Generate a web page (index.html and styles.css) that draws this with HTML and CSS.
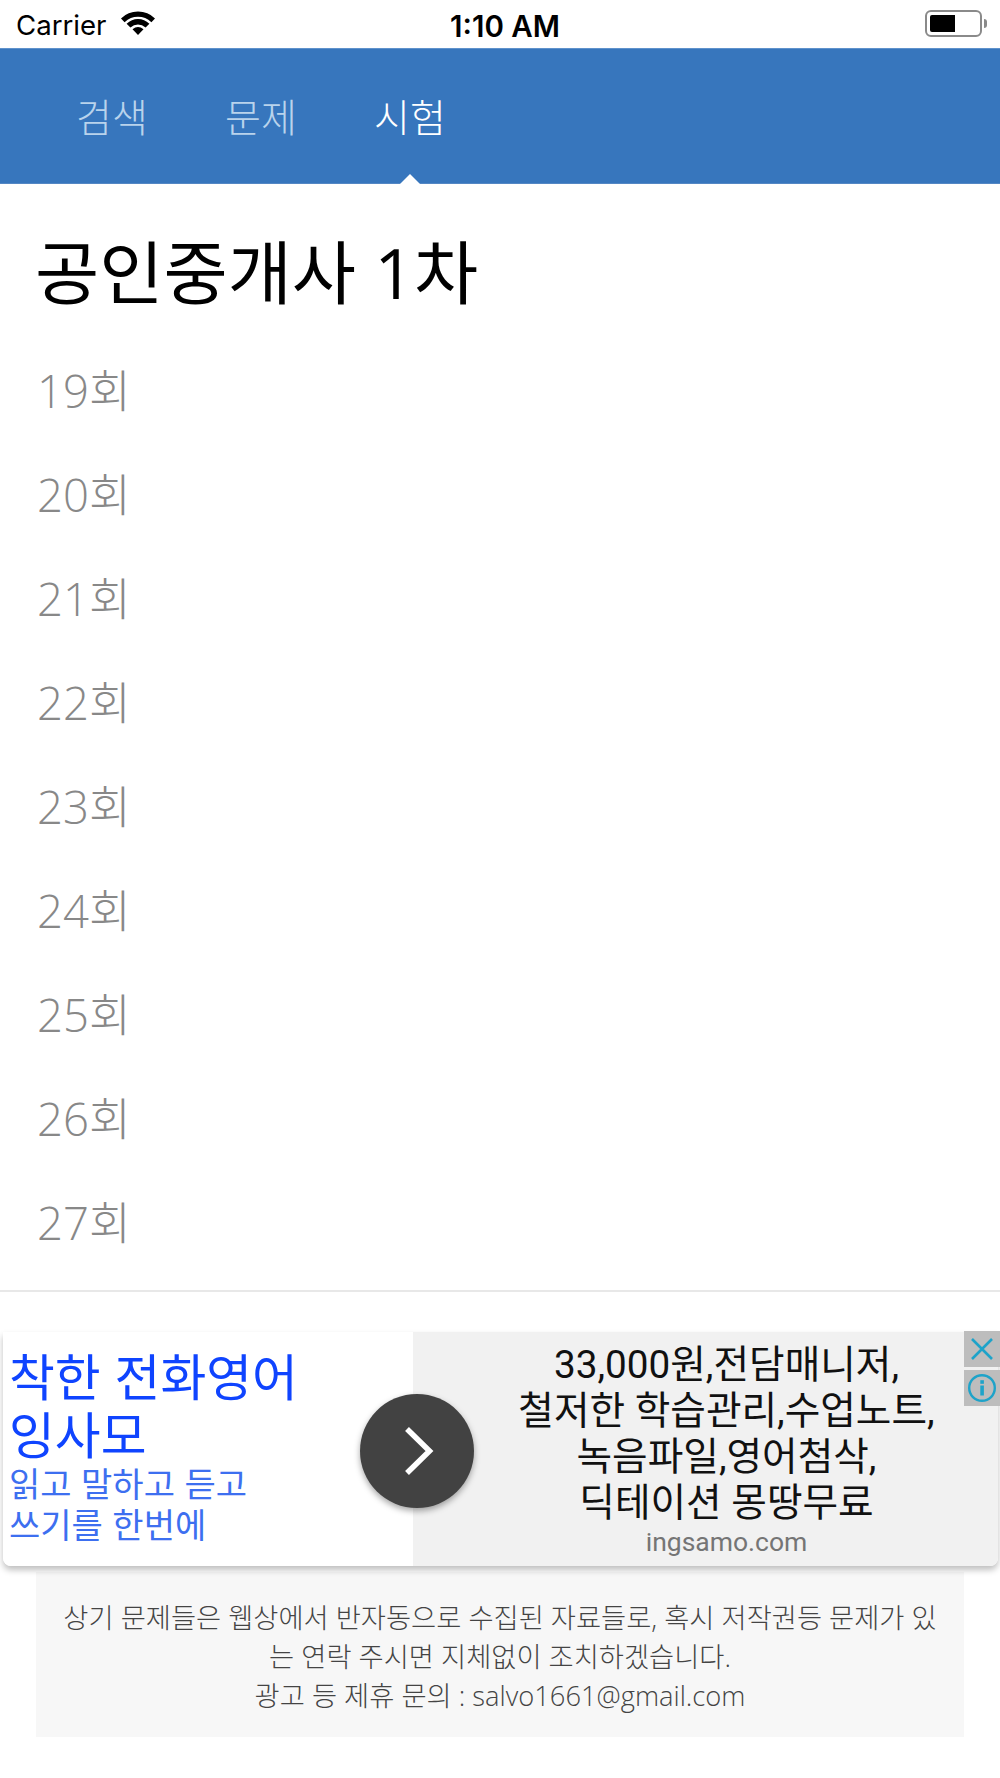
FILE: index.html
```html
<!DOCTYPE html>
<html lang="ko">
<head>
<meta charset="utf-8">
<title>공인중개사 1차</title>
<link rel="stylesheet" href="styles.css">
</head>
<body>
<div class="status">
  <div class="status-left">
    <span>Carrier</span>
    <svg class="wifi" width="36" height="26" viewBox="0 0 36 26"><path d="M18 25 L12.5 19.2 Q18 14.6 23.5 19.2Z M18 1.5 Q8 1.5 1 8.4 L4.6 12.2 Q10.4 6.8 18 6.8 Q25.6 6.8 31.4 12.2 L35 8.4 Q28 1.5 18 1.5Z M18 9 Q11.6 9 6.6 13.8 L10.4 17.6 Q13.8 14.4 18 14.4 Q22.2 14.4 25.6 17.6 L29.4 13.8 Q24.4 9 18 9Z" fill="#000"/></svg>
  </div>
  <div class="status-time">1:10 AM</div>
  <div class="battery"><span class="battery-body"><span class="battery-fill"></span></span><span class="battery-tip"></span></div>
</div>
<nav class="nav">
  <a class="tab">검색</a>
  <a class="tab">문제</a>
  <a class="tab active">시험</a>
</nav>
<main class="content">
  <h1 class="title">공인중개사 1차</h1>
  <ul class="rounds">
    <li>19회</li>
    <li>20회</li>
    <li>21회</li>
    <li>22회</li>
    <li>23회</li>
    <li>24회</li>
    <li>25회</li>
    <li>26회</li>
    <li>27회</li>
  </ul>
</main>
<section class="ad">
  <div class="ad-left">
    <div class="ad-head">착한 전화영어<br>잉사모</div>
    <div class="ad-sub">읽고 말하고 듣고<br>쓰기를 한번에</div>
  </div>
  <div class="ad-right">
    <div class="ad-copy">33,000원,전담매니저,<br>철저한 학습관리,수업노트,<br>녹음파일,영어첨삭,<br>딕테이션 몽땅무료</div>
    <div class="ad-url">ingsamo.com</div>
  </div>
  <div class="ad-go"><svg width="36" height="52" viewBox="0 0 36 52"><path d="M8 4 L30.5 26 L8 48" fill="none" stroke="#fff" stroke-width="5.5"/></svg></div>
  <div class="ad-badges">
    <span class="ad-badge"><svg width="26" height="26" viewBox="0 0 26 26"><path d="M3 3 L23 23 M23 3 L3 23" stroke="#1ea3c9" stroke-width="2.6" fill="none"/></svg></span>
    <span class="ad-badge"><svg width="30" height="30" viewBox="0 0 30 30"><circle cx="15" cy="15" r="12.8" fill="none" stroke="#1ea3c9" stroke-width="2.4"/><rect x="13.3" y="12.5" width="3.6" height="10" fill="#1ea3c9"/><rect x="13.3" y="7.2" width="3.6" height="3.6" fill="#1ea3c9"/></svg></span>
  </div>
</section>
<footer class="note">상기 문제들은 웹상에서 반자동으로 수집된 자료들로, 혹시 저작권등 문제가 있<br>는 연락 주시면 지체없이 조치하겠습니다.<br>광고 등 제휴 문의 : salvo1661@gmail.com</footer>
</body>
</html>
```
FILE: styles.css
```css
* { box-sizing: border-box; }
html, body { margin: 0; padding: 0; }
body {
  width: 1000px;
  height: 1778px;
  overflow: hidden;
  background: #fff;
  color: #000;
  font-family: "Noto Sans CJK KR", "Liberation Sans", sans-serif;
}
.status {
  height: 48px;
  position: relative;
  display: flex;
  align-items: center;
  justify-content: space-between;
  padding: 0 13px 0 16px;
  font-family: "Inter", "Liberation Sans", sans-serif;
}
.status-left { display: flex; align-items: center; gap: 14px; font-size: 27.6px; }
.status-left span { margin-top: 2px; }
.wifi { margin-top: -3px; }
.status-time {
  position: absolute;
  left: 10px;
  right: 0;
  top: 6px;
  text-align: center;
  font-size: 29.5px;
  line-height: 40px;
  font-weight: 600;
}
.battery { display: flex; align-items: center; margin-top: -2px; }
.battery-body {
  width: 57px;
  height: 27px;
  border: 2px solid #8a8a8a;
  border-radius: 6px;
  padding: 3px;
  display: block;
}
.battery-fill { display: block; width: 25px; height: 100%; background: #000; border-radius: 2px 0 0 2px; }
.battery-tip { width: 3px; height: 9px; margin-left: 2px; background: #8a8a8a; border-radius: 0 3px 3px 0; }
.nav {
  height: 136px;
  background: #3776bd;
  border-top: 1px solid #5f92cc;
  border-bottom: 1px solid #5487c4;
  display: flex;
  align-items: center;
  padding: 0 0 0 76px;
  gap: 74px;
}
.tab {
  position: relative;
  font-size: 39px;
  line-height: 1;
  color: #b9d3ec;
  width: 75px;
  margin-top: -1px;
  white-space: nowrap;
  font-weight: 300;
}
.tab.active { color: #fff; }
.tab.active::after {
  content: "";
  position: absolute;
  left: 25px;
  bottom: -50px;
  border-left: 11px solid transparent;
  border-right: 11px solid transparent;
  border-bottom: 11px solid #fff;
}
.content { height: 1108px; border-bottom: 2px solid #e8e8e8; margin: 0; }
.title {
  margin: 0;
  padding: 48px 0 0 35px;
  font-family: "Open Sans", "Noto Sans CJK KR", sans-serif;
  font-size: 69.8px;
  font-weight: 400;
  line-height: 80px;
}
.rounds { list-style: none; margin: 0; padding: 26px 0 0 37px; }
.rounds li {
  height: 104px;
  line-height: 104px;
  font-family: "Open Sans", "Noto Sans CJK KR", sans-serif;
  font-size: 45.5px;
  font-weight: 300;
  color: #888;
}
.ad {
  position: relative;
  margin-top: 40px;
  height: 234px;
  display: flex;
  box-shadow: 0 4px 6px rgba(0,0,0,.25);
  border-radius: 0 0 8px 8px;
  margin-left: 3px;
  margin-right: 2px;
}
.ad-left {
  width: 410px;
  background: #fff;
  padding: 13px 0 0 6px;
  border-radius: 8px 0 0 8px;
}
.ad-head { font-size: 49.8px; line-height: 58px; color: #0f44ff; }
.ad-sub { font-size: 34px; line-height: 41px; color: #3d6ff0; margin-top: 1px; }
.ad-right {
  flex: 1;
  background: #f1f1f1;
  text-align: center;
  padding: 10px 0 0 42px;
  border-radius: 0 0 8px 0;
}
.ad-copy { font-family: "Roboto", "Noto Sans CJK KR", sans-serif; font-size: 38.7px; line-height: 46px; color: #111; }
.ad-url { font-family: "Roboto", sans-serif; font-size: 26.5px; line-height: 30px; color: #757575; margin-top: 1px; }
.ad-go {
  position: absolute;
  left: 357px;
  top: 62px;
  width: 114px;
  height: 114px;
  border-radius: 50%;
  background: #424242;
  box-shadow: 0 3px 6px rgba(0,0,0,.35);
  display: flex;
  align-items: center;
  justify-content: center;
}
.ad-badges {
  position: absolute;
  right: -2px;
  top: -1px;
  width: 36px;
  display: flex;
  flex-direction: column;
  gap: 3px;
}
.ad-badge {
  height: 36px;
  background: #bdbdbd;
  display: flex;
  align-items: center;
  justify-content: center;
}
.note {
  margin: 6px 36px 0;
  height: 165px;
  background: #f7f7f7;
  text-align: center;
  padding: 26px 0 0;
  font-family: "Open Sans", "Noto Sans CJK KR", sans-serif;
  font-size: 27.3px;
  font-weight: 300;
  line-height: 39px;
  color: #444;
}
```
